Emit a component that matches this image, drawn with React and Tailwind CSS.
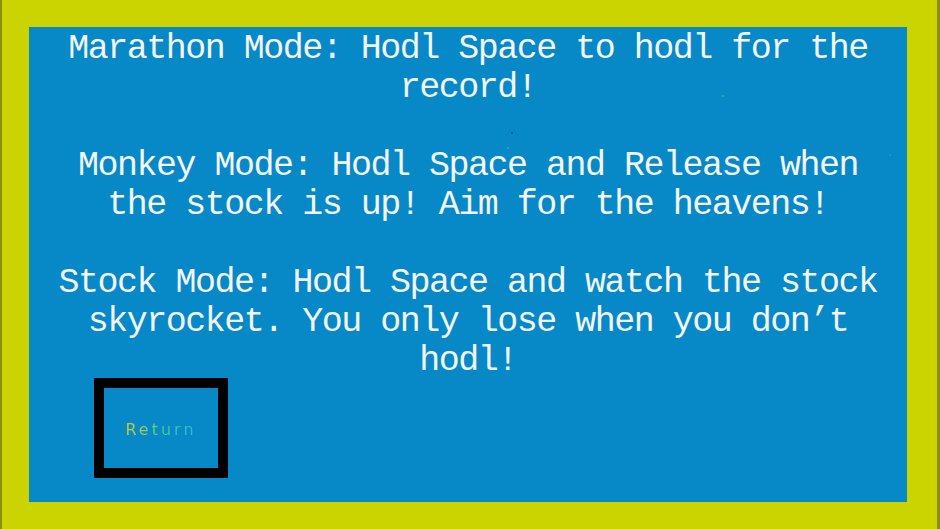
import React from 'react';

const modes = [
    ['Marathon Mode: Hodl Space to hodl for the', 'record!'],
    ['Monkey Mode: Hodl Space and Release when', 'the stock is up! Aim for the heavens!'],
    ['Stock Mode: Hodl Space and watch the stock', 'skyrocket. You only lose when you don’t', 'hodl!'],
];

const particles = [
    { left: 'left-[693px]', top: 'top-[68px]', color: 'bg-[#3fb7a8]' },
    { left: 'left-[482px]', top: 'top-[105px]', color: 'bg-[#1b3f9a]' },
    { left: 'left-[478px]', top: 'top-[120px]', color: 'bg-[#4aa3c9]' },
    { left: 'left-[860px]', top: 'top-[127px]', color: 'bg-[#2a9f9a]' },
];

export default function App() {
    return (
        <div className="w-full h-[529px] bg-[#cbd300] border-l-2 border-r-[3px] border-[#8b8f10] pl-[27px] pr-[30px] pt-[27px] pb-[27px]">
            <div className="relative w-full h-full bg-[#0788c7] flex flex-col">
                {particles.map((p, i) => (
                    <span key={i} className={`absolute w-[2px] h-[2px] rounded-full ${p.left} ${p.top} ${p.color}`} />
                ))}

                <div
                    className="pt-[3px] text-center text-[#f2f6fa] text-[35px] leading-[39px] tracking-[-1.5px]"
                    style={{ fontFamily: '"Liberation Mono", "DejaVu Sans Mono", monospace' }}
                >
                    {modes.map((lines, i) => (
                        <div key={i}>
                            {lines.map((line) => (
                                <div key={line} className="whitespace-pre">{line}</div>
                            ))}
                            {i < modes.length - 1 && <div className="h-[39px]" />}
                        </div>
                    ))}
                </div>

                <button className="-mt-[3px] ml-[65px] w-[134px] h-[100px] border-[10px] border-black flex items-center justify-center">
                    <span
                        className="pt-[3px] text-[16px] tracking-[3px] bg-gradient-to-r from-[#d2c62e] via-[#44d07a] to-[#2fb4e8] bg-clip-text text-transparent"
                        style={{ fontFamily: '"DejaVu Sans", sans-serif' }}
                    >
                        Return
                    </span>
                </button>
            </div>
        </div>
    );
}
